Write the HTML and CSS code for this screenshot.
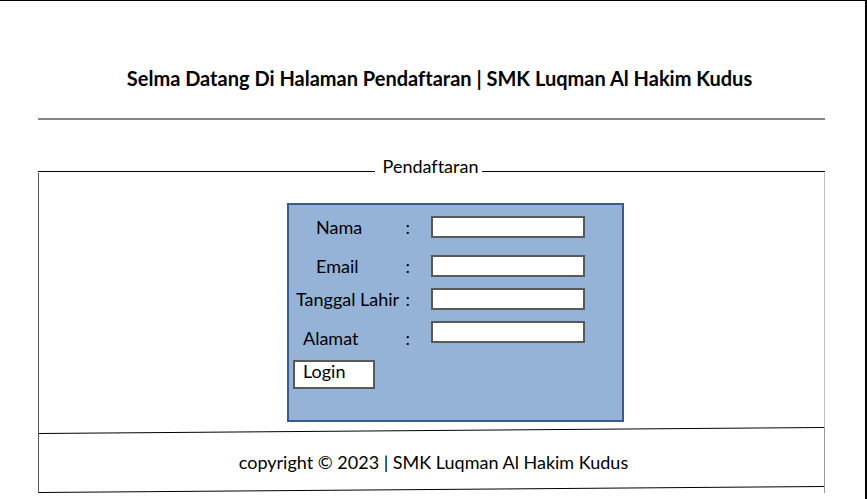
FILE: index.html
```
<!DOCTYPE html>
<html lang="id">
<head>
<meta charset="utf-8">
<title>Pendaftaran | SMK Luqman Al Hakim Kudus</title>
<link rel="stylesheet" href="styles.css">
</head>
<body>
<div class="page">
  <header class="header">
    <h1 class="title">Selma Datang Di Halaman Pendaftaran | SMK Luqman Al Hakim Kudus</h1>
  </header>
  <main>
    <h2 class="legend">Pendaftaran</h2>
    <div class="panel">
      <form class="form">
        <div class="row">
          <label class="label indent-large" for="nama"><span>Nama</span><span class="colon">:</span></label>
          <input class="field" id="nama" type="text">
        </div>
        <div class="row row-tall">
          <label class="label indent-large" for="email"><span>Email</span><span class="colon">:</span></label>
          <input class="field" id="email" type="text">
        </div>
        <div class="row">
          <label class="label" for="lahir"><span>Tanggal Lahir</span><span class="colon">:</span></label>
          <input class="field" id="lahir" type="text">
        </div>
        <div class="row row-tall">
          <label class="label indent-small" for="alamat"><span>Alamat</span><span class="colon">:</span></label>
          <input class="field field-top" id="alamat" type="text">
        </div>
        <button class="login" type="button">Login</button>
      </form>
    </div>
  </main>
  <footer class="footer">
    <svg class="slant" viewBox="0 0 787 7" preserveAspectRatio="none" aria-hidden="true"><path d="M0 6.5L787 .5"/></svg>
    <p class="copyright">copyright © 2023 | SMK Luqman Al Hakim Kudus</p>
    <svg class="slant" viewBox="0 0 787 7" preserveAspectRatio="none" aria-hidden="true"><path d="M0 6.5L787 .5"/></svg>
  </footer>
</div>
</body>
</html>
```
FILE: styles.css
```
* {
  box-sizing: border-box;
}

body {
  margin: 0;
  background: #fff;
  color: #000;
  font: 18px/22px Lato, "Open Sans", sans-serif;
  font-variant-ligatures: none;
}

.page {
  min-height: 100vh;
  padding: 0 40px 0 38px;
  border-top: 1px solid #000;
  border-right: 2px solid #000;
}

.header {
  padding: 64px 0 27px 16px;
  border-bottom: 2px solid #868686;
  text-align: center;
}

.title {
  margin: 0;
  font-size: 20px;
  line-height: 26px;
  font-weight: 700;
}

.legend {
  display: flex;
  align-items: flex-end;
  gap: 4px;
  margin: 35px 0 0;
  font-size: 18px;
  line-height: 22px;
  font-weight: 400;
}

.legend::before,
.legend::after {
  content: "";
  height: 5px;
  border-top: 1px solid #000;
}

.legend::before {
  flex: 335;
  margin-right: 4px;
}

.legend::after {
  flex: 341;
}

.panel {
  display: grid;
  grid-template-columns: 248fr 337px 200fr;
  margin-top: -4px;
  padding: 30px 0 5px;
  border-left: 1px solid #555;
  border-right: 1px solid #bfbfbf;
}

.form {
  grid-column: 2;
  display: flex;
  flex-direction: column;
  align-items: flex-start;
  gap: 11px;
  padding: 11px 4px 31px;
  border: 2px solid #385d8a;
  background: #95b3d7;
}

.row {
  display: flex;
  align-items: flex-end;
}

.row-tall {
  height: 28px;
}

.label {
  display: flex;
  justify-content: space-between;
  width: 138px;
  padding: 0 21px 0 3px;
}

.indent-small {
  padding-left: 10px;
}

.indent-large {
  padding-left: 23px;
}

.field {
  width: 154px;
  height: 22px;
  padding: 0 4px;
  border: 2px solid #595959;
  background: #fff;
  font: inherit;
}

.field-top {
  align-self: flex-start;
}

.login {
  width: 82px;
  height: 29px;
  padding: 0 8px 8px;
  border: 2px solid #595959;
  background: #fff;
  color: #000;
  font: inherit;
  line-height: 18px;
  text-align: left;
}

.footer {
  border-left: 1px solid #555;
  border-right: 1px solid #999;
}

.slant {
  display: block;
  width: 100%;
  height: 7px;
}

.slant path {
  fill: none;
  stroke: #000;
  stroke-width: 1px;
}

.copyright {
  margin: 0;
  padding: 17px 0 13px 4px;
  text-align: center;
}
```
